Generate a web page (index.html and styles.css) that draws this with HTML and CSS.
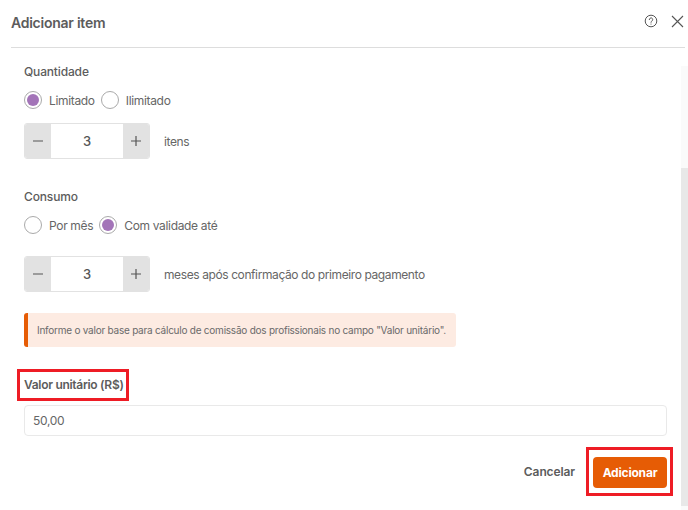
FILE: index.html
```html
<!DOCTYPE html>
<html lang="pt-BR">
<head>
<meta charset="UTF-8">
<meta name="viewport" content="width=device-width, initial-scale=1.0">
<title>Adicionar item</title>
<link rel="stylesheet" href="styles.css">
</head>
<body>
<div class="modal">
    <header class="modal-header">
        <h2>Adicionar item</h2>
        <div class="header-icons">
            <svg class="icon-help" width="14" height="14" viewBox="0 0 14 14" fill="none" stroke="#555" stroke-width="1">
                <circle cx="7" cy="7" r="5.8"/>
                <path d="M5.3 5.6a1.7 1.7 0 1 1 2.6 1.4c-.6.4-.9.7-.9 1.3" stroke-linecap="round"/>
                <circle cx="7" cy="10" r=".6" fill="#555" stroke="none"/>
            </svg>
            <svg class="icon-close" width="13" height="13" viewBox="0 0 13 13" fill="none" stroke="#555" stroke-width="1.1">
                <path d="M1 1l11 11M12 1L1 12"/>
            </svg>
        </div>
    </header>

    <div class="modal-body">
        <div class="content">
            <section class="group">
                <div class="group-title">Quantidade</div>
                <div class="radios">
                    <span class="radio checked"></span><span class="radio-label">Limitado</span>
                    <span class="radio"></span><span class="radio-label">Ilimitado</span>
                </div>
                <div class="stepper-row">
                    <div class="stepper">
                        <span class="step-btn"><svg width="12" height="12" viewBox="0 0 12 12" stroke="#555" stroke-width="1.2"><path d="M1 6h10"/></svg></span>
                        <span class="step-value">3</span>
                        <span class="step-btn"><svg width="12" height="12" viewBox="0 0 12 12" stroke="#555" stroke-width="1.2"><path d="M1 6h10M6 1v10"/></svg></span>
                    </div>
                    <span class="stepper-text">itens</span>
                </div>
            </section>

            <section class="group group-consumo">
                <div class="group-title">Consumo</div>
                <div class="radios">
                    <span class="radio"></span><span class="radio-label">Por mês</span>
                    <span class="radio checked"></span><span class="radio-label">Com validade até</span>
                </div>
                <div class="stepper-row stepper-row-wide">
                    <div class="stepper">
                        <span class="step-btn"><svg width="12" height="12" viewBox="0 0 12 12" stroke="#555" stroke-width="1.2"><path d="M1 6h10"/></svg></span>
                        <span class="step-value">3</span>
                        <span class="step-btn"><svg width="12" height="12" viewBox="0 0 12 12" stroke="#555" stroke-width="1.2"><path d="M1 6h10M6 1v10"/></svg></span>
                    </div>
                    <span class="stepper-text">meses após confirmação do primeiro pagamento</span>
                </div>
            </section>

            <div class="alert">Informe o valor base para cálculo de comissão dos profissionais no campo "Valor unitário".</div>

            <label class="field-label marked" for="valor">Valor unitário (R$)</label>
            <input class="field-input" id="valor" type="text" value="50,00">

            <div class="actions">
                <span class="btn-cancel">Cancelar</span>
                <span class="btn-wrap marked"><button class="btn-add" type="button">Adicionar</button></span>
            </div>
        </div>
        <div class="scrollbar"><div class="scroll-thumb"></div></div>
    </div>
</div>
</body>
</html>
```

FILE: styles.css
```css
body {
    margin: 0;
    background: #fff;
    font-family: Inter, "Liberation Sans", sans-serif;
    font-size: 12px;
    letter-spacing: -0.33px;
    color: #666;
}
.modal {
    width: 688px;
    height: 510px;
    overflow: hidden;
}
.modal-header {
    display: flex;
    justify-content: space-between;
    align-items: center;
    height: 47px;
    margin: 0 3px 0 11px;
    padding-right: 1px;
    border-bottom: 1px solid #ddd;
}
.modal-header h2 {
    margin: 0 0 3px;
    font-size: 14px;
    font-weight: 600;
    letter-spacing: -0.25px;
    color: #5c5c5c;
}
.header-icons {
    display: flex;
    align-items: center;
    gap: 13px;
    margin-bottom: 5px;
}
.modal-body {
    display: flex;
    height: 462px;
}
.content {
    width: 643px;
    padding: 16px 14px 0 24px;
}
.scrollbar {
    width: 7px;
    margin-top: 18px;
    background: #fafafa;
}
.scroll-thumb {
    height: 338px;
    margin-top: 102px;
    background: #e8e8e8;
}
.group-title {
    font-weight: 500;
    line-height: 16px;
    letter-spacing: -0.15px;
    color: #5c5c5c;
}
.radios {
    display: flex;
    align-items: center;
    height: 18px;
    margin-top: 11px;
}
.radio {
    width: 16px;
    height: 16px;
    border: 1px solid #aaa;
    border-radius: 50%;
    background: #fff;
    position: relative;
}
.radio.checked::after {
    content: "";
    position: absolute;
    top: 2px;
    left: 2px;
    width: 12px;
    height: 12px;
    border-radius: 50%;
    background: #a374b8;
}
.radio-label {
    margin: 0 6px 0 7px;
}
.stepper-row {
    display: flex;
    align-items: center;
    margin-top: 14px;
}
.stepper-row-wide {
    margin-top: 22px;
}
.stepper {
    display: flex;
    width: 126px;
    height: 36px;
    box-sizing: border-box;
    border: 1px solid #e2e2e2;
    border-radius: 3px;
    overflow: hidden;
}
.step-btn {
    display: flex;
    justify-content: center;
    align-items: center;
    width: 26px;
    background: #e2e2e2;
}
.step-value {
    flex: 1;
    text-align: center;
    font-size: 13px;
    font-weight: 500;
    line-height: 34px;
    color: #555;
}
.stepper-text {
    margin-left: 14px;
    letter-spacing: -0.4px;
}
.group-consumo {
    margin-top: 30px;
}
.alert {
    width: 432px;
    height: 34px;
    margin-top: 21px;
    box-sizing: border-box;
    padding-left: 9px;
    border-left: 4px solid #e65c05;
    border-radius: 3px;
    background: #fdebe2;
    font-size: 10px;
    line-height: 34px;
    letter-spacing: -0.235px;
    white-space: nowrap;
    color: #6a6a6a;
}
.marked {
    outline: 3px solid #ee1c25;
}
.field-label {
    display: block;
    width: 102px;
    margin: 25px 0 0 -4px;
    padding: 5px 0 5px 4px;
    font-weight: 600;
    line-height: 16px;
    letter-spacing: -0.3px;
    white-space: nowrap;
    color: #5c5c5c;
}
.field-input {
    display: block;
    width: 100%;
    height: 31px;
    margin-top: 7px;
    box-sizing: border-box;
    padding: 0 8px;
    border: 1px solid #e9e9e9;
    border-radius: 4px;
    font: inherit;
    letter-spacing: -0.33px;
    color: #666;
}
.actions {
    display: flex;
    justify-content: flex-end;
    align-items: center;
    margin-top: 14px;
    margin-right: -3px;
}
.btn-cancel {
    margin-right: 14px;
    font-weight: 600;
    letter-spacing: -0.1px;
    color: #5c5c5c;
}
.btn-wrap {
    display: block;
    padding: 7px 3px 5px 4px;
}
.btn-add {
    display: block;
    width: 74px;
    height: 31px;
    border: 0;
    border-radius: 4px;
    background: #e65c05;
    font: inherit;
    font-weight: 700;
    letter-spacing: -0.2px;
    color: #fff;
}
```
